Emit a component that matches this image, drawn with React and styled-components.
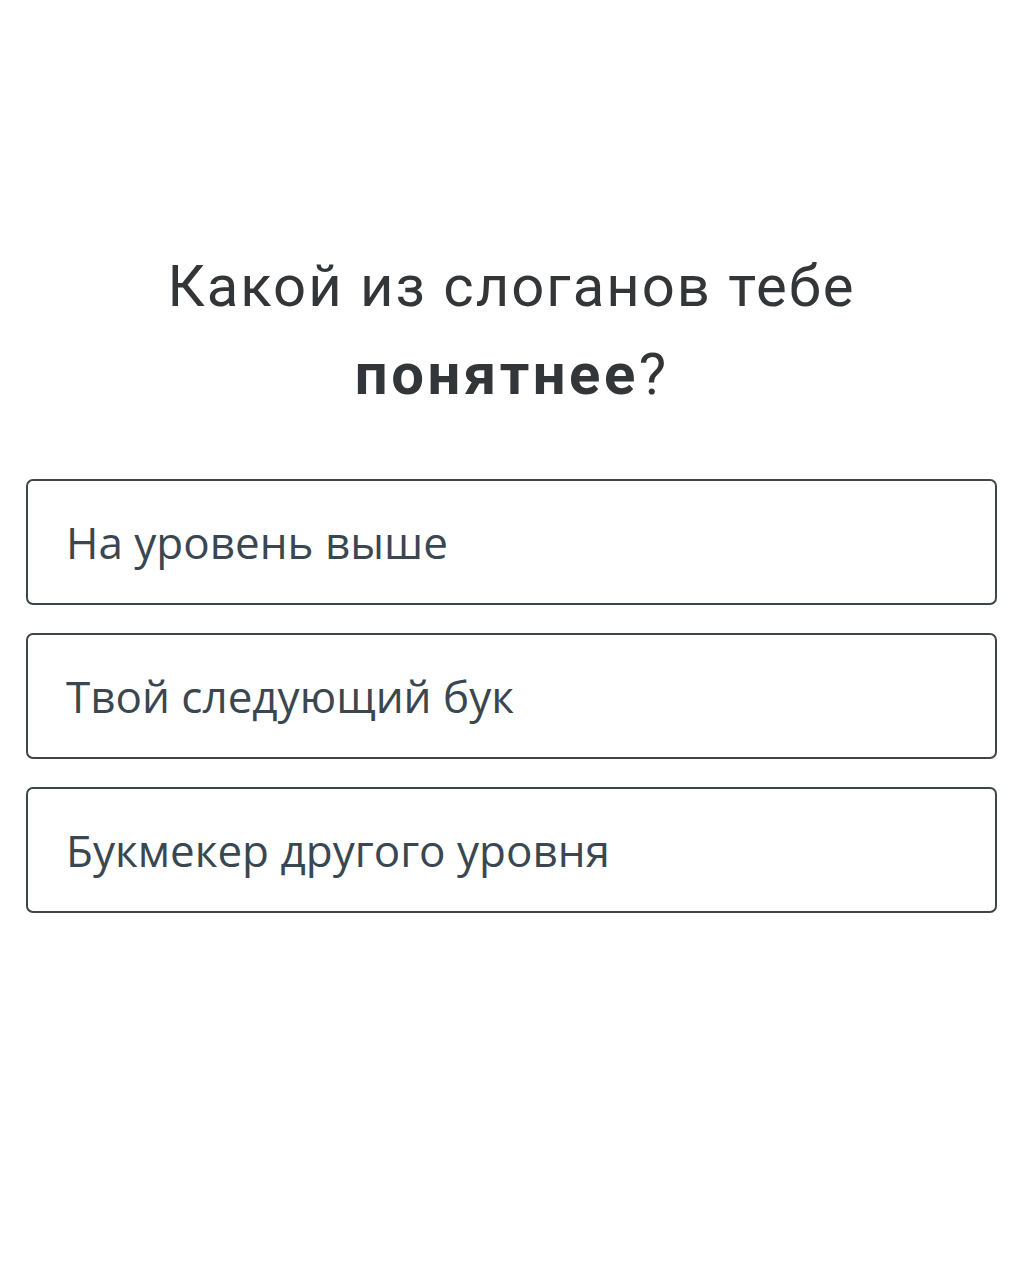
import React from "react";
import styled, { createGlobalStyle } from "styled-components";

const GlobalStyle = createGlobalStyle`
  html, body {
    margin: 0;
    padding: 0;
    background: #ffffff;
  }
  body {
    font-family: "Open Sans", "Noto Sans", sans-serif;
  }
`;

const Page = styled.div`
  width: 1023px;
  height: 1280px;
  box-sizing: border-box;
  padding: 242px 26px 0;
  display: flex;
  flex-direction: column;
`;

const Question = styled.h1`
  margin: 0 0 61px;
  text-align: center;
  font-family: Roboto, "Open Sans", sans-serif;
  font-weight: 400;
  font-size: 58px;
  letter-spacing: 2px;
  line-height: 88px;
  color: #333638;

  b {
    font-weight: 700;
    letter-spacing: 3.5px;
  }
`;

const Options = styled.div`
  display: flex;
  flex-direction: column;
  gap: 28px;
`;

const Option = styled.button`
  display: flex;
  align-items: center;
  height: 126px;
  box-sizing: border-box;
  padding: 0 38px;
  border: 2.5px solid #3f4548;
  border-radius: 7px;
  background: #fff;
  font-family: "Open Sans", "Noto Sans", sans-serif;
  font-size: 44px;
  color: #3a4750;
  text-align: left;
  cursor: pointer;
`;

const slogans = ["На уровень выше", "Твой следующий бук", "Букмекер другого уровня"];

export default function App() {
  return (
    <>
      <GlobalStyle />
      <Page>
        <Question>
          Какой из слоганов тебе
          <br />
          <b>понятнее</b>?
        </Question>
        <Options>
          {slogans.map((s) => (
            <Option key={s}>{s}</Option>
          ))}
        </Options>
      </Page>
    </>
  );
}
